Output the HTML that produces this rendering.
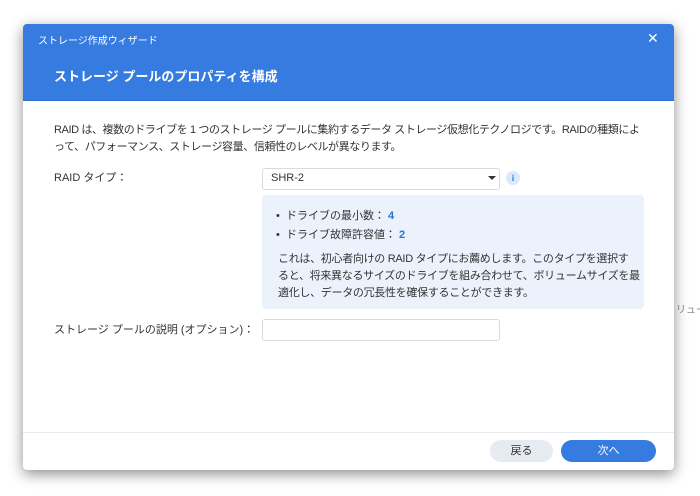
<!DOCTYPE html>
<html><head><meta charset="utf-8"><style>
body{margin:0;width:700px;height:496px;background:#fff;position:relative;overflow:hidden;font-family:"Liberation Sans","Noto Sans CJK JP",sans-serif;color:#333}
.a{position:absolute;white-space:nowrap}
#dlg{position:absolute;left:23px;top:24px;width:651px;height:446px;background:#fff;border-radius:4px;box-shadow:0 4px 14px rgba(0,0,0,.45);overflow:hidden}
#hd{position:absolute;left:0;top:0;width:651px;height:76px;background:#367be0;border-bottom:1px solid #2f6fd0}
.t{font-size:11px;line-height:17px}
</style></head><body>
<div class="a" style="left:676px;top:301px;font-size:10px;color:#888">リュー</div>
<div id="dlg">
<div id="hd">
<div class="a" style="left:15px;top:8px;font-size:10px;color:#fff">ストレージ作成ウィザード</div>
<div class="a" style="left:624px;top:6px;font-size:14px;color:#fff">✕</div>
<div class="a" style="left:31px;top:42px;font-size:13px;font-weight:bold;color:#fff">ストレージ プールのプロパティを構成</div>
</div>
<div class="a t" style="left:31px;top:98px;letter-spacing:-0.4px">RAID は、複数のドライブを 1 つのストレージ プールに集約するデータ ストレージ仮想化テクノロジです。RAIDの種類によ<br>って、パフォーマンス、ストレージ容量、信頼性のレベルが異なります。</div>
<div class="a t" style="left:31px;top:146px">RAID タイプ：</div>
<div class="a" style="left:239px;top:144px;width:236px;height:20px;border:1px solid #d5dbe3;border-radius:3px"></div>
<div class="a t" style="left:248px;top:146px">SHR-2</div>
<div class="a" style="left:465px;top:152px;width:0;height:0;border-left:4px solid transparent;border-right:4px solid transparent;border-top:4px solid #333"></div>
<div class="a" style="left:483px;top:147px;width:14px;height:14px;border-radius:7px;background:#dce8fb;color:#367be0;font-size:9px;font-weight:bold;text-align:center;line-height:14px;font-family:'Liberation Serif',serif">i</div>
<div class="a" style="left:239px;top:171px;width:382px;height:114px;background:#ebf2fc;border-radius:4px"></div>
<div class="a t" style="left:253px;top:184px">•&nbsp; ドライブの最小数： <b style="color:#2e6fd6">4</b></div>
<div class="a t" style="left:253px;top:203px">•&nbsp; ドライブ故障許容値： <b style="color:#2e6fd6">2</b></div>
<div class="a t" style="left:255px;top:227px;letter-spacing:-0.3px">これは、初心者向けの RAID タイプにお薦めします。このタイプを選択す<br>ると、将来異なるサイズのドライブを組み合わせて、ボリュームサイズを最<br>適化し、データの冗長性を確保することができます。</div>
<div class="a t" style="left:31px;top:298px">ストレージ プールの説明 (オプション)：</div>
<div class="a" style="left:239px;top:295px;width:236px;height:20px;border:1px solid #d5dbe3;border-radius:3px"></div>
<div class="a" style="left:0;top:408px;width:651px;height:1px;background:#e6eaf0"></div>
<div class="a" style="left:467px;top:416px;width:63px;height:22px;border-radius:11px;background:#e6ebf1;font-size:11px;text-align:center;line-height:22px">戻る</div>
<div class="a" style="left:538px;top:416px;width:95px;height:22px;border-radius:11px;background:#367be0;color:#fff;font-size:11px;text-align:center;line-height:22px">次へ</div>
</div>
</body></html>
